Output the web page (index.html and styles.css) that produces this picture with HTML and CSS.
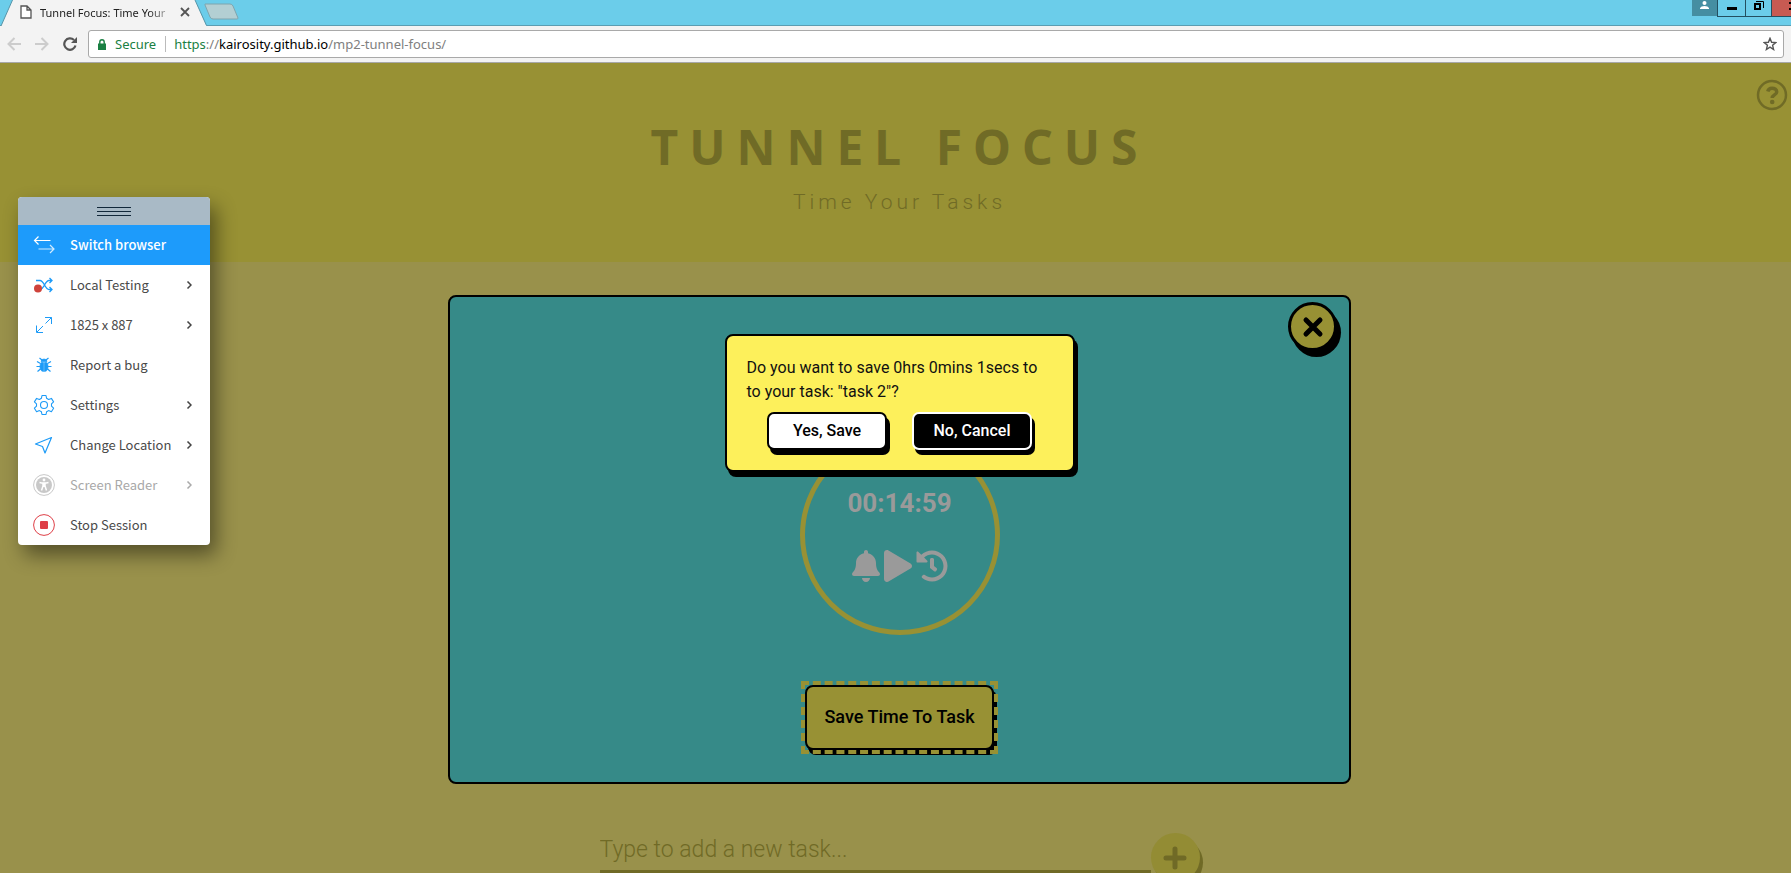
FILE: index.html
```
<!DOCTYPE html>
<html lang="en">
<head>
<meta charset="utf-8">
<title>Tunnel Focus: Time Your Tasks</title>
<link rel="stylesheet" href="styles.css">
</head>
<body>
<div class="browser">
  <div class="tabstrip">
    <svg class="tab-shape" width="208" height="26" viewBox="0 0 208 26"><path d="M1 26 12.500 0H195l11.500 26z" fill="#f3f3f3"/><path d="M1 26 12.500 0M195 0l11.500 25.500" stroke="#5795a8" fill="none"/></svg>
    <div class="tab">
      <svg width="12" height="14" viewBox="0 0 12 14" fill="#fff" stroke="#555" stroke-width="1.300"><path d="M1 1h6l4 4v8H1zM7 1v4h4"/></svg>
      <span class="tab-title">Tunnel Focus: Time Your</span>
      <button class="tab-close" aria-label="Close tab"><svg width="10" height="10" viewBox="0 0 10 10" stroke="#555" stroke-width="1.800"><path d="M1 1l8 8M9 1l-8 8"/></svg></button>
    </div>
    <button class="new-tab" aria-label="New tab"><svg width="36" height="18" viewBox="0 0 36 18"><path d="M1 1h25q2 0 3 2l5 12q0 1-1 1H9q-2 0-3-2L1 2z" fill="#b3cfd3" stroke="#7fa5ae"/></svg></button>
    <div class="window-buttons">
      <button class="wb user" aria-label="Profile"><svg width="9" height="8" viewBox="0 0 9 8" fill="#fff"><circle cx="4.500" cy="2" r="2"/><path d="M0 8V7q1-2 4.500-2T9 7v1z"/></svg></button>
      <button class="wb" aria-label="Minimize"><svg width="10" height="8" viewBox="0 0 10 8"><path d="M0 5h10v3H0z"/></svg></button>
      <button class="wb restore" aria-label="Restore"><svg width="10" height="11" viewBox="0 0 10 11" fill="none" stroke="#000"><path d="M1 4h5v5H1z" stroke-width="2"/><path d="M2 1.500h7.500V8"/></svg></button>
      <button class="wb close" aria-label="Close window"><svg width="2" height="8" viewBox="0 0 2 8"><path d="M0 0h2v2H0zM0 6h2v2H0z"/></svg></button>
    </div>
  </div>
  <div class="toolbar">
    <button class="nav" aria-label="Back"><svg width="14" height="14" viewBox="0 0 14 14" fill="none" stroke="#ccc" stroke-width="2"><path d="M14 7H2M7.500 1l-6 6 6 6"/></svg></button>
    <button class="nav" aria-label="Forward"><svg width="14" height="14" viewBox="0 0 14 14" fill="none" stroke="#ccc" stroke-width="2"><path d="M0 7h12M6.500 1l6 6-6 6"/></svg></button>
    <button class="nav" aria-label="Reload"><svg width="14" height="14" viewBox="0 0 14 14" fill="none" stroke="#555" stroke-width="2.200"><path d="M12.500 8.500A5.700 5.700 0 1 1 11 3"/><path d="M14 0v6H8z" fill="#555" stroke="none"/></svg></button>
    <div class="address">
      <svg width="8" height="11" viewBox="0 0 8 11"><path d="M0 4.500h8V11H0z" fill="#1a8043"/><path d="M1.800 5V3a2.200 2.200 0 0 1 4.400 0v2" fill="none" stroke="#1a8043" stroke-width="1.400"/></svg>
      <span class="secure">Secure</span>
      <span class="url"><span class="scheme">https</span>://<b>kairosity.github.io</b>/mp2-tunnel-focus/</span>
      <button class="star" aria-label="Bookmark"><svg width="14" height="14" viewBox="0 0 14 14" fill="none" stroke="#555" stroke-width="1.400"><path d="M7 1.300l1.600 4 4.200.3-3.200 2.700 1 4.200L7 10.200l-3.600 2.300 1-4.200L1.200 5.600l4.200-.3z"/></svg></button>
    </div>
  </div>
</div>

<div class="page">
  <header class="hero">
    <h1>TUNNEL FOCUS</h1>
    <p>Time Your Tasks</p>
    <button class="help" aria-label="Help"><svg width="32" height="32" viewBox="0 0 32 32" fill="none" stroke="#706b26"><circle cx="16" cy="16" r="14" stroke-width="2.500"/><path d="M11.800 12.500c.5-2.200 2-3.300 4.200-3.300 2.700 0 4.700 1.500 4.700 3.700 0 3-4.500 3-4.500 6" stroke-width="3.500"/><circle cx="16.200" cy="23" r="2.300" fill="#706b26" stroke="none"/></svg></button>
  </header>

  <main>
    <section class="modal">
      <button class="modal-close" aria-label="Close timer"><svg width="22" height="22" viewBox="0 0 22 22" stroke="#000" stroke-width="5" stroke-linecap="round"><path d="M4 4l14 14M18 4L4 18"/></svg></button>
      <div class="ring">
        <div class="time">00:14:59</div>
        <div class="controls">
          <button aria-label="Sound"><svg width="28" height="32" viewBox="0 0 448 512"><path d="M224 512c35.320 0 63.970-28.650 63.970-64H160.030c0 35.350 28.650 64 63.970 64zm215.390-149.710c-19.320-20.760-55.470-51.990-55.470-154.290 0-77.700-54.480-139.900-127.940-155.160V32c0-17.670-14.320-32-31.980-32s-31.980 14.330-31.980 32v20.840C118.560 68.100 64.080 130.300 64.080 208c0 102.300-36.150 133.530-55.470 154.290-6 6.450-8.660 14.160-8.610 21.710.11 16.400 12.980 32 32.100 32h383.800c19.120 0 32-15.600 32.100-32 .05-7.550-2.610-15.270-8.610-21.710z"/></svg></button>
          <button aria-label="Start"><svg width="28" height="32" viewBox="0 0 448 512"><path d="M424.400 214.700L72.400 6.600C43.800-10.300 0 6.100 0 47.900V464c0 37.500 40.700 60.100 72.400 41.300l352-208c31.400-18.500 31.500-64.100 0-82.600z"/></svg></button>
          <button aria-label="Reset"><svg width="32" height="32" viewBox="0 0 512 512"><path d="M504 255.531c.253 136.640-111.180 248.372-247.820 248.468-59.015.042-113.223-20.530-155.822-54.911-11.077-8.940-11.905-25.541-1.839-35.607l11.267-11.267c8.609-8.609 22.353-9.551 31.891-1.984C173.062 425.135 212.781 440 256 440c101.705 0 184-82.311 184-184 0-101.705-82.311-184-184-184-48.814 0-93.149 18.969-126.068 49.932l50.754 50.754c10.080 10.080 2.941 27.314-11.313 27.314H24c-8.837 0-16-7.163-16-16V38.627c0-14.254 17.234-21.393 27.314-11.314l49.372 49.372C129.209 34.136 189.552 8 256 8c136.810 0 247.747 110.780 248 247.531zm-180.912 78.784l9.823-12.630c8.138-10.463 6.253-25.542-4.210-33.679L288 256.349V152c0-13.255-10.745-24-24-24h-16c-13.255 0-24 10.745-24 24v135.651l65.409 50.874c10.463 8.137 25.541 6.253 33.679-4.210z"/></svg></button>
        </div>
      </div>
      <button class="save">Save Time To Task</button>
      <div class="dialog" role="dialog" aria-label="Save time">
        <p>Do you want to save 0hrs 0mins 1secs to to your task: "task 2"?</p>
        <div class="choices">
          <button class="choice yes">Yes, Save</button>
          <button class="choice no">No, Cancel</button>
        </div>
      </div>
    </section>

    <form class="add">
      <input type="text" aria-label="New task" placeholder="Type to add a new task...">
      <button type="button" class="plus" aria-label="Add task"><svg width="24" height="24" viewBox="0 0 24 24" stroke="#706a26" stroke-width="5" stroke-linecap="round"><path d="M12 3v18M3 12h18"/></svg></button>
    </form>
  </main>
</div>

<nav class="menu" aria-label="Session">
  <div class="grip"><i></i><i></i><i></i></div>
  <button class="item active"><svg width="22" height="22" viewBox="0 0 22 22" fill="none" stroke="#fff"><path d="M17.500 6.500H1.500M5.500 2.500l-4 4 4 4" stroke-width="1.200"/><path d="M5.500 15H21M17 11l4 4-4 4" stroke-width="1.200" opacity=".8"/></svg><span>Switch browser</span></button>
  <button class="item"><svg width="22" height="22" viewBox="0 0 22 22" fill="none" stroke="#1d9bf7" stroke-width="1.300"><path d="M3 6.500h4c4 0 5 9 9 9h3M3 15.500h4c4 0 5-9 9-9h3M16.500 4l2.500 2.500L16.500 9M16.500 13l2.500 2.500-2.500 2.500"/><circle cx="5" cy="14.500" r="4" fill="#cf433b" stroke="none"/></svg><span>Local Testing</span><svg class="chev" viewBox="0 0 6 8"><path d="M1.500.500 5 4 1.500 7.500"/></svg></button>
  <button class="item"><svg width="22" height="22" viewBox="0 0 22 22" fill="none" stroke="#1d9bf7"><path d="M12.500 9.500 18.500 3.500M12 3.500h6.500V10M10 12l-6 6M3.500 11.500V18.500H10"/></svg><span>1825 x 887</span><svg class="chev" viewBox="0 0 6 8"><path d="M1.500.500 5 4 1.500 7.500"/></svg></button>
  <button class="item"><svg width="22" height="22" viewBox="0 0 22 22" fill="none" stroke="#1d9bf7" stroke-width="1.200"><path d="M10.500 8.500v9c-2.500-.3-3.500-2-3.500-4.500s.5-4 1.500-4.500zM11.500 8.500v9c2.500-.3 3.500-2 3.500-4.500s-.5-4-1.500-4.500zM8 7.500q0-2.500 3-2.500t3 2.500z" fill="#1d9bf7" stroke-width=".7"/><path d="M6.500 4l2.500 2M15.500 4L13 6M4 7.500l3.500 2M18 7.500l-3.500 2M3.500 12.500H7M18.500 12.500H15M4.500 17.500l3-2.500M17.500 17.500l-3-2.500"/></svg><span>Report a bug</span></button>
  <button class="item"><svg width="22" height="22" viewBox="0 0 22 22" fill="none" stroke="#1d9bf7" stroke-width="1.100"><path d="M9 1.500h4l.6 2.800 2 1.200 2.800-1.100 2.200 3.500-2.100 2v2.300l2.100 2-2.200 3.500-2.800-1.100-2 1.200-.6 2.700H9l-.6-2.700-2-1.200-2.800 1.100-2.200-3.500 2.100-2V9.900l-2.100-2 2.200-3.500 2.800 1.100 2-1.200z" stroke-linejoin="round"/><circle cx="11" cy="11" r="3.500"/></svg><span>Settings</span><svg class="chev" viewBox="0 0 6 8"><path d="M1.500.500 5 4 1.500 7.500"/></svg></button>
  <button class="item"><svg width="22" height="22" viewBox="0 0 22 22" fill="none" stroke="#1d9bf7" stroke-width="1.200" stroke-linejoin="round"><path d="M18.500 3.500 2.500 10l7 2.500 2.500 6.500z"/></svg><span>Change Location</span><svg class="chev" viewBox="0 0 6 8"><path d="M1.500.500 5 4 1.500 7.500"/></svg></button>
  <button class="item" disabled><svg width="22" height="22" viewBox="0 0 22 22" fill="none"><circle cx="11" cy="11" r="10.400" stroke="#c8c8c8"/><circle cx="11" cy="11" r="8" fill="#c8c8c8"/><g stroke="#fff" stroke-width="1.500"><path d="M6.500 8.500q4.500 1.200 9 0M8.500 16.500 10 12V9M13.500 16.500 12 12V9M11 9v4"/></g><circle cx="11" cy="6" r="1.400" fill="#fff"/></svg><span>Screen Reader</span><svg class="chev" viewBox="0 0 6 8"><path d="M1.500.500 5 4 1.500 7.500"/></svg></button>
  <button class="item"><svg width="22" height="22" viewBox="0 0 22 22"><circle cx="11" cy="11" r="10.400" fill="none" stroke="#de3f47"/><rect x="7" y="7" width="8" height="8" rx="1" fill="#de3f47"/></svg><span>Stop Session</span></button>
</nav>
</body>
</html>
```
FILE: styles.css
```
* { box-sizing: border-box; }
body {
  margin: 0;
  height: 100vh;
  overflow: hidden;
  display: flex;
  flex-direction: column;
  font-family: Roboto, sans-serif;
  background: #99914b;
}
button { border: 0; padding: 0; background: none; color: inherit; font: inherit; }
svg { display: block; flex: none; }

/* Browser frame */
.browser { font-family: "Noto Sans", sans-serif; }
.tabstrip {
  position: relative;
  display: flex;
  height: 26px;
  background: #6bcdea;
  border-bottom: 1px solid #5b9db2;
}
.tab-shape { position: absolute; left: 0; top: 0; }
.tab {
  position: relative;
  display: flex;
  align-items: center;
  width: 204px;
  height: 24px;
  padding-left: 20px;
  font-size: 11px;
  color: #222;
}
.tab-title {
  width: 130px;
  margin-left: 8px;
  white-space: nowrap;
  -webkit-mask-image: linear-gradient(90deg, #000 84%, transparent 104%);
  mask-image: linear-gradient(90deg, #000 84%, transparent 104%);
}
.tab-close { margin-left: 10px; }
.new-tab { height: 24px; }
.window-buttons { display: flex; align-items: flex-start; margin-left: auto; }
.wb {
  display: flex;
  justify-content: center;
  width: 28px;
  height: 17px;
  padding-top: 2px;
  border: solid #234f60;
  border-width: 0 0 1px 1px;
}
.wb.user { width: 25px; height: 16px; padding-top: 1px; background: #458ea2; border: 0; }
.wb.restore { width: 26px; padding-top: 0; }
.wb.close { justify-content: flex-end; width: 20px; background: #c75a52; }
.toolbar {
  display: flex;
  align-items: center;
  height: 37px;
  padding: 0 7px;
  background: #f3f3f3;
  border-bottom: 1px solid #a8a8a8;
}
.nav { margin-right: 14px; }
.nav:nth-child(3) { margin-right: 11px; }
.address {
  flex: 1;
  display: flex;
  align-items: center;
  height: 28px;
  padding: 0 6px 0 9px;
  background: #fff;
  border: 1px solid #a9a9a9;
  border-radius: 3px;
  font-size: 13px;
  color: #808080;
}
.secure { margin: 0 9px; color: #1a8043; }
.url { padding-left: 8px; border-left: 1px solid #bbb; line-height: 16px; }
.url b { font-weight: 400; color: #000; }
.scheme { color: #1a8043; }
.star { margin-left: auto; }

/* Page */
.page { flex: 1; min-height: 0; overflow: hidden; }
.hero {
  position: relative;
  height: 199px;
  padding: 50px 0 0 8px;
  background: #989134;
  color: #706b26;
  text-align: center;
}
.hero h1 {
  margin: 0;
  font: 700 48px/68px "Noto Sans", sans-serif;
  letter-spacing: 11px;
}
.hero p { margin: 8px 0 0; font-size: 21px; font-weight: 300; line-height: 26px; letter-spacing: 4px; }
.help { position: absolute; top: 16px; right: 3px; }
main {
  display: flex;
  flex-direction: column;
  align-items: center;
  padding: 33px 0 0 8px;
}
.modal {
  position: relative;
  display: flex;
  flex-direction: column;
  align-items: center;
  width: calc(50vw + 8px);
  padding: 138px 0 32px;
  background: #368a88;
  border: 2px solid #000;
  border-radius: 8px;
}
.modal-close {
  position: absolute;
  top: 5px;
  right: 12px;
  display: grid;
  place-items: center;
  width: 49px;
  height: 49px;
  border: 3px solid #000;
  border-radius: 50%;
  background: #989134;
  box-shadow: 4px 6px #000;
}
.ring {
  display: flex;
  flex-direction: column;
  align-items: center;
  width: 200px;
  height: 200px;
  padding-top: 47px;
  border: 5px solid #989134;
  border-radius: 50%;
  color: #9a9a9a;
}
.time { font-size: 26px; font-weight: 700; line-height: 32px; }
.controls { display: flex; gap: 4px; margin-top: 31px; }
.controls svg { fill: #9a9a9a; }
.save {
  position: relative;
  margin-top: 50px;
  padding: 19px 17px 20px;
  border: 2px solid #000;
  border-radius: 8px;
  background: #989134;
  box-shadow: 3px 5px #000;
  color: #000;
  font-size: 18px;
  font-weight: 500;
  line-height: 22px;
}
.save::after { content: ""; position: absolute; inset: -6px; border: 4px dashed #989134; }
.dialog {
  position: absolute;
  top: 37px;
  left: 50%;
  width: 350px;
  margin-left: -175px;
  padding: 20px;
  background: #fdf05b;
  border: 2px solid #000;
  border-radius: 8px;
  box-shadow: 3px 5px #000;
}
.dialog p { margin: 0; font-size: 16px; line-height: 24px; color: #111; }
.choices { display: flex; justify-content: center; gap: 25px; margin-top: 8px; }
.choice {
  width: 120px;
  height: 38px;
  padding-bottom: 2px;
  border: 2px solid #000;
  border-radius: 7px;
  background: #fff;
  box-shadow: 3px 5px #000;
  color: #000;
  font-size: 16px;
  font-weight: 500;
}
.choice.no { border-color: #fff; background: #000; color: #fff; }
.add { display: flex; align-items: flex-start; width: 600px; padding-top: 49px; }
.add input {
  flex: 1;
  min-width: 0;
  height: 40px;
  padding: 0 0 4px;
  border: 0;
  border-bottom: 3px solid #706a26;
  border-radius: 0;
  background: none;
  font: 300 23px Roboto, sans-serif;
  outline: 0;
}
.add input::placeholder { color: #706a26; opacity: 1; }
.plus {
  display: grid;
  place-items: center;
  width: 49px;
  height: 49px;
  border-radius: 50%;
  background: #938c34;
  box-shadow: 3px 5px #706a26;
}

/* Floating session menu */
.menu {
  position: absolute;
  top: 197px;
  left: 18px;
  width: 192px;
  border-radius: 4px;
  overflow: hidden;
  background: #fff;
  box-shadow: 6px 10px 20px rgba(0, 0, 0, .45);
  font: 400 13px "Noto Sans CJK SC", sans-serif;
  color: #4a4a4a;
}
.grip {
  display: flex;
  flex-direction: column;
  align-items: center;
  justify-content: center;
  gap: 3px;
  height: 28px;
  background: #a9bac6;
}
.grip i { width: 34px; height: 1px; background: #12283a; }
.item { display: flex; align-items: center; width: 100%; height: 40px; padding: 0 18px 0 15px; }
.item span { flex: 1; margin-left: 15px; padding-bottom: 1px; text-align: left; }
.item.active { background: #1d9bfb; color: #fff; font-weight: 500; }
.item:disabled { color: #a8a8a8; }
.chev { width: 6px; height: 8px; fill: none; stroke: #444; stroke-width: 1.500; }
.item:disabled .chev { stroke: #aaa; }
```
